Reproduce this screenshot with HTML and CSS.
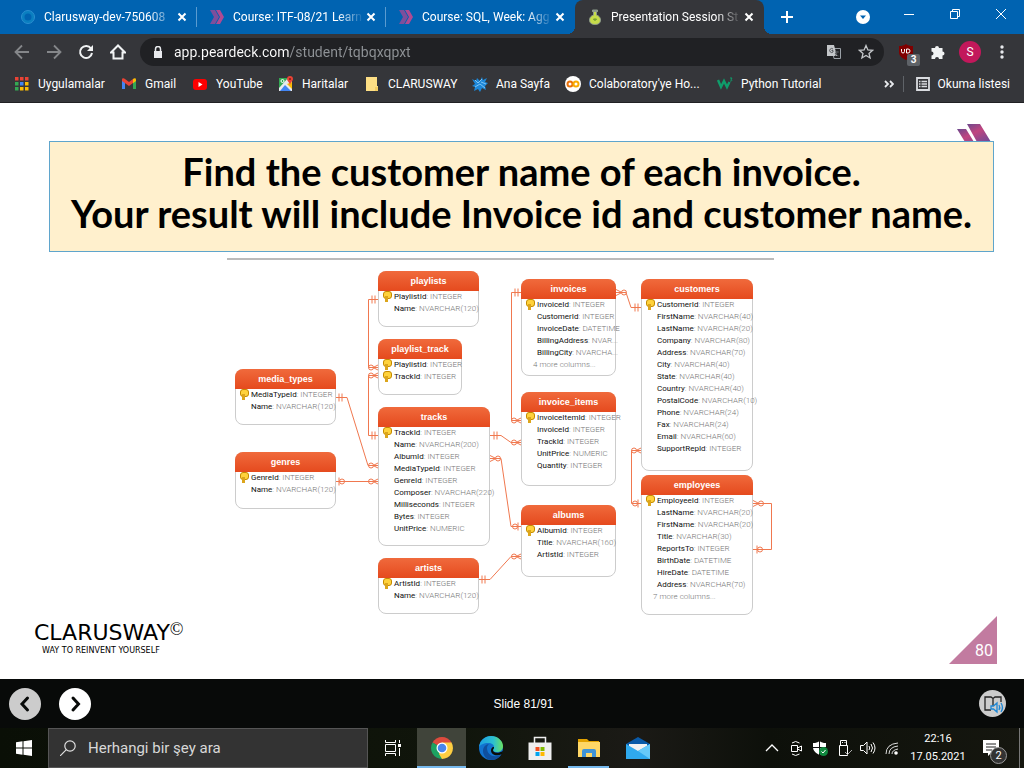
FILE: index.html
```html
<!DOCTYPE html>
<html lang="tr">
<head>
<meta charset="utf-8">
<title>Presentation Session Student</title>
<link rel="stylesheet" href="styles.css">
</head>
<body>
<header class="browser">
  <div class="tabstrip">
    <div class="tab">
      <svg class="icon" viewBox="0 0 16 16"><circle cx="8" cy="8" r="5" fill="none" stroke="#0a7fc0" stroke-width="3"/><circle cx="8" cy="8" r="6.500" fill="none" stroke="#2b8fd0" stroke-width="1"/></svg>
      <span class="tab-title">Clarusway-dev-750608</span>
      <button class="tab-close" aria-label="Kapat"><svg viewBox="0 0 10 10"><path d="M1.500 1.500l7 7m0-7l-7 7"/></svg></button>
    </div>
    <div class="tab">
      <svg class="icon" viewBox="0 0 16 16"><path d="M1 1h5l4 7-4 7H1l4-7z" fill="#7d4f9c"/><path d="M7 1h4l4 7-4 7H7l4-7z" fill="#b04a92"/></svg>
      <span class="tab-title">Course: ITF-08/21 Learn</span>
      <button class="tab-close" aria-label="Kapat"><svg viewBox="0 0 10 10"><path d="M1.500 1.500l7 7m0-7l-7 7"/></svg></button>
    </div>
    <div class="tab tab-last">
      <svg class="icon" viewBox="0 0 16 16"><path d="M1 1h5l4 7-4 7H1l4-7z" fill="#7d4f9c"/><path d="M7 1h4l4 7-4 7H7l4-7z" fill="#b04a92"/></svg>
      <span class="tab-title">Course: SQL, Week: Agg</span>
      <button class="tab-close" aria-label="Kapat"><svg viewBox="0 0 10 10"><path d="M1.500 1.500l7 7m0-7l-7 7"/></svg></button>
    </div>
    <div class="tab tab-active">
      <svg class="icon" viewBox="0 0 16 16"><path d="M5.500 1h5v1.500h-1V6c3 1 4 3 4 5 0 3-2 4.500-5.500 4.500S2.500 14 2.500 11c0-2 1-4 4-5V2.500h-1z" fill="#c6dc4a" stroke="#8d9a8a"/><path d="M5.500 1h5v2h-5z" fill="#8d9a8a"/><path d="M8 9v3m-2-2l2 1 2-1" stroke="#6f9a2e" fill="none"/></svg>
      <span class="tab-title">Presentation Session St</span>
      <button class="tab-close" aria-label="Kapat"><svg viewBox="0 0 10 10"><path d="M1.500 1.500l7 7m0-7l-7 7"/></svg></button>
    </div>
    <button class="new-tab" aria-label="Yeni sekme"><svg viewBox="0 0 12 12"><path d="M6 0v12M0 6h12"/></svg></button>
    <div class="window-buttons">
      <button aria-label="Sekme ara"><svg width="14" height="14" viewBox="0 0 14 14"><circle cx="7" cy="7" r="7" fill="#fff"/><path d="M4 5.500h6L7 9z" fill="#0063b1"/></svg></button>
      <button aria-label="Simge durumuna küçült"><svg width="10" height="14" viewBox="0 0 10 14"><path d="M0 6.500h10" stroke="#fff"/></svg></button>
      <button aria-label="Önceki boyut"><svg width="10" height="14" viewBox="0 0 10 14"><path d="M.5 3.500h7v7h-7zM2.500 3.500v-2h7v7h-2" fill="none" stroke="#fff"/></svg></button>
      <button aria-label="Pencereyi kapat"><svg width="10" height="14" viewBox="0 0 10 14"><path d="M0 1l10 10M10 1L0 11" stroke="#fff"/></svg></button>
    </div>
  </div>

  <div class="toolbar">
    <nav class="nav-buttons">
      <button class="dim" aria-label="Geri"><svg width="16" height="16" viewBox="0 0 16 16"><path d="M15 8H2m6-6.500L1.500 8 8 14.500"/></svg></button>
      <button class="dim" aria-label="İleri"><svg width="16" height="16" viewBox="0 0 16 16"><path d="M1 8h13M8 1.500L14.500 8 8 14.500"/></svg></button>
      <button aria-label="Yenile"><svg width="16" height="16" viewBox="0 0 16 16"><path d="M13 4.500A6 6 0 1 0 14 9" stroke-width="2"/><path d="M15 1v6H9z" fill="#f1f3f4" stroke="none"/></svg></button>
      <button aria-label="Ana sayfa"><svg width="16" height="16" viewBox="0 0 16 16"><path d="M1 8.500L8 1.500l7 7h-2.500v6h-9v-6z" stroke-width="2"/></svg></button>
    </nav>
    <div class="omnibox">
      <svg width="10" height="12" viewBox="0 0 10 12"><path d="M1 5h8v7H1z" fill="#e8eaed"/><path d="M2.500 5V3a2.500 2.500 0 0 1 5 0v2" fill="none" stroke="#e8eaed" stroke-width="1.500"/></svg>
      <input class="url" aria-label="Adres" value="app.peardeck.com/student/tqbqxqpxt">
      <button aria-label="Çevir"><svg width="16" height="16" viewBox="0 0 16 16"><path d="M6 4.500h8.500v10H8z" fill="none" stroke="#9aa0a6"/><path d="M1 1h7l3 11H1z" fill="#c4c7ca"/><path d="M7 5a2 2 0 1 0 0 3V6.500H5.500M9 8h4m-2-1v1c0 1.500-1 3-2 4m0-3c1 1.500 2 2.500 3.500 3" fill="none" stroke="#55585c"/></svg></button>
      <button aria-label="Yer işareti"><svg width="16" height="16" viewBox="0 0 16 16"><path d="M8 1.500l1.900 4.400 4.700.4-3.600 3.100 1.100 4.600L8 11.500 3.900 14 5 9.400 1.400 6.300l4.700-.4z" fill="none" stroke="#c4c7ca" stroke-width="1.300"/></svg></button>
    </div>
    <div class="extensions">
      <button class="ublock" aria-label="uBlock"><svg width="16" height="16" viewBox="0 0 16 16"><path d="M8 0c2 1.500 4 2 7 2v6c0 4-3 6-7 8-4-2-7-4-7-8V2c3 0 5-.5 7-2z" fill="#800000"/><path d="M3.500 5v2.500a1.500 1.500 0 0 0 3 0V5m2 4V5H10a2 2 0 0 1 0 4z" fill="none" stroke="#fff"/></svg><span class="badge">3</span></button>
      <button aria-label="Uzantılar"><svg width="16" height="16" viewBox="0 0 16 16"><path d="M1.500 4H5a2 2 0 1 1 4 0h3.500v3.500a2 2 0 1 1 0 4V15H9a2 2 0 1 0-4 0H1.500v-3.500a2 2 0 1 0 0-4z" fill="#f1f3f4"/></svg></button>
      <button class="avatar" aria-label="Profil">S</button>
      <button aria-label="Menü"><svg width="4" height="14" viewBox="0 0 4 14"><g fill="#e8eaed"><circle cx="2" cy="2" r="1.700"/><circle cx="2" cy="7" r="1.700"/><circle cx="2" cy="12" r="1.700"/></g></svg></button>
    </div>
  </div>

  <nav class="bookmarks">
    <div class="bookmark-list">
      <a href="#"><svg class="icon" viewBox="0 0 16 16"><path d="M1 1h3.500v3.500H1zm5 0h3.500v3.500H6zm5 0h3.500v3.500H11z" fill="#ea4335"/><path d="M1 6h3.500v3.500H1z" fill="#34a853"/><path d="M6 6h3.500v3.500H6z" fill="#4285f4"/><path d="M11 6h3.500v3.500H11z" fill="#fbbc04"/><path d="M1 11h3.500v3.500H1z" fill="#34a853"/><path d="M6 11h3.500v3.500H6zm5 0h3.500v3.500H11z" fill="#fbbc04"/></svg>Uygulamalar</a>
      <a href="#"><svg class="icon" viewBox="0 0 16 16"><path d="M1 4v9h3V6z" fill="#4285f4"/><path d="M12 6v7h3V4z" fill="#34a853"/><path d="M1 3.500C1 2 3 2 4 3l4 3 4-3v4L8 10 1 5z" fill="#ea4335"/><path d="M12 3c1-1 3-1 3 .5V5l-3 2.200z" fill="#fbbc04"/></svg>Gmail</a>
      <a href="#"><svg class="icon" viewBox="0 0 16 16"><rect x="1" y="3" width="14" height="11" rx="3" fill="#f00"/><path d="M6.500 6v5l4-2.500z" fill="#fff"/></svg>YouTube</a>
      <a href="#"><svg class="icon" viewBox="0 0 16 16"><path d="M1 2h13v13H1z" fill="#e8eaed"/><path d="M1 2h9L1 12z" fill="#34a853"/><path d="M2 15l5-6 6 6z" fill="#4285f4"/><path d="M9 8l5 5V6z" fill="#fbbc04"/><circle cx="4.500" cy="5" r="1.500" fill="none" stroke="#fff"/><path d="M12 0a3 3 0 0 0-3 3c0 2.500 3 3 3 7 0-4 3-4.500 3-7a3 3 0 0 0-3-3z" fill="#ea4335"/><circle cx="12" cy="3" r="1" fill="#7b1c14"/></svg>Haritalar</a>
      <a href="#"><svg class="icon" viewBox="0 0 16 16"><path d="M2 1h11v9h1v5H2z" fill="#fddf85"/><path d="M11 15v-4h3v4z" fill="#f4ce62"/></svg>CLARUSWAY</a>
      <a href="#"><svg class="icon" viewBox="0 0 16 16"><path d="M8 5l2-4 1 3 4-2-2 4 3 1-3 3 1 4-4-2-2 4-2-3-4 2 1-4-3-1 3-2-3-5 4 2 1-3z" fill="#1d87d8"/><path d="M3 4l3 3 4-4m-7 8l5-3 5 4M9 6l5 2" stroke="#7cc4f4" fill="none"/></svg>Ana Sayfa</a>
      <a href="#"><svg class="icon" viewBox="0 0 16 16"><circle cx="8" cy="8" r="8" fill="#fff"/><circle cx="5" cy="8" r="2.500" fill="none" stroke="#e8710a" stroke-width="2"/><circle cx="11" cy="8" r="2.500" fill="none" stroke="#f9ab00" stroke-width="2"/></svg>Colaboratory'ye Ho...</a>
      <a href="#"><svg class="icon" viewBox="0 0 16 16"><path d="M1 4l3 7 3-6 3 6 2.500-5" fill="none" stroke="#0f9d6b" stroke-width="2.400"/><path d="M13 2h2l-1 1.500c1.500 0 1 2-1 1.500" fill="none" stroke="#0f9d6b"/></svg>Python Tutorial</a>
    </div>
    <button class="more" aria-label="Diğer"><svg width="10" height="8" viewBox="0 0 10 8"><path d="M1 1l3 3-3 3M6 1l3 3-3 3" fill="none" stroke="#e8eaed" stroke-width="1.800"/></svg></button>
    <a class="reading" href="#"><svg width="14" height="14" viewBox="0 0 14 14"><path d="M1 1h12v12H1z" fill="none" stroke="#dadce0" stroke-width="1.800"/><path d="M3 4.500h1.500m1 0H11M3 7h1.500m1 0H11M3 9.500h1.500m1 0H11" stroke="#dadce0" stroke-width="1.400"/></svg>Okuma listesi</a>
  </nav>
</header>

<main class="slide">
  <svg class="mark" viewBox="0 0 34 18" width="34" height="18"><defs><linearGradient id="mg" x2="1" y2="1"><stop offset="0" stop-color="#4b4a94"/><stop offset=".5" stop-color="#c0457f"/><stop offset="1" stop-color="#6a4a98"/></linearGradient></defs><path d="M0 5h9l8 13H8zM10 0h13l11 18H20z" fill="url(#mg)"/></svg>
  <h1 class="question">Find the customer name of each invoice.<br>Your result will include Invoice id and customer name.</h1>
  <div class="diagram-area">
    <div class="diagram">
      <svg class="links" viewBox="227 258 547 358" width="547" height="358">
        <defs>
          <g id="one"><path d="M4-4v8M7-4v8"/></g>
          <g id="many"><path d="M0-3l6 3-6 3"/><circle cx="8" cy="0" r="2.500"/></g>
          <g id="opt"><path d="M4-4v8"/><circle cx="7" cy="0" r="2.500"/></g>
        </defs>
        <path d="M379 299.500H368.500V367.500H379M379 375.500H368.500V435.500H379M335 397.500H347L368 465.500H379M335 481.500H379M490 435.500H501L511 442.500H522M522 292.500H511.500V420.500H522M616 292.500H626L631 307.500H642M490 458.500H501L511 526.500H522M478 579.500H490L511 556.500H522M642 450.500H631.500V503.500H642M753 503.500H771.500V549.500H753"/>
        <use href="#one" transform="translate(379 299.500) scale(-1 1)"/>
        <use href="#many" transform="translate(379 367.500) scale(-1 1)"/>
        <use href="#many" transform="translate(379 375.500) scale(-1 1)"/>
        <use href="#one" transform="translate(379 435.500) scale(-1 1)"/>
        <use href="#one" transform="translate(335 397.500)"/>
        <use href="#many" transform="translate(379 465.500) scale(-1 1)"/>
        <use href="#opt" transform="translate(335 481.500)"/>
        <use href="#many" transform="translate(379 481.500) scale(-1 1)"/>
        <use href="#one" transform="translate(490 435.500)"/>
        <use href="#many" transform="translate(522 442.500) scale(-1 1)"/>
        <use href="#one" transform="translate(522 292.500) scale(-1 1)"/>
        <use href="#many" transform="translate(522 420.500) scale(-1 1)"/>
        <use href="#many" transform="translate(616 292.500)"/>
        <use href="#one" transform="translate(642 307.500) scale(-1 1)"/>
        <use href="#many" transform="translate(490 458.500)"/>
        <use href="#opt" transform="translate(522 526.500) scale(-1 1)"/>
        <use href="#one" transform="translate(478 579.500)"/>
        <use href="#many" transform="translate(522 556.500) scale(-1 1)"/>
        <use href="#many" transform="translate(642 450.500) scale(-1 1)"/>
        <use href="#opt" transform="translate(642 503.500) scale(-1 1)"/>
        <use href="#many" transform="translate(753 503.500)"/>
        <use href="#opt" transform="translate(753 549.500)"/>
      </svg>

      <section class="entity playlists"><h2>playlists</h2><ul><li class="key"><b>PlaylistId</b>: INTEGER</li><li><b>Name</b>: NVARCHAR(120)</li></ul></section>
      <section class="entity playlist-track"><h2>playlist_track</h2><ul><li class="key"><b>PlaylistId</b>: INTEGER</li><li class="key"><b>TrackId</b>: INTEGER</li></ul></section>
      <section class="entity tracks"><h2>tracks</h2><ul><li class="key"><b>TrackId</b>: INTEGER</li><li><b>Name</b>: NVARCHAR(200)</li><li><b>AlbumId</b>: INTEGER</li><li><b>MediaTypeId</b>: INTEGER</li><li><b>GenreId</b>: INTEGER</li><li><b>Composer</b>: NVARCHAR(220)</li><li><b>Milliseconds</b>: INTEGER</li><li><b>Bytes</b>: INTEGER</li><li><b>UnitPrice</b>: NUMERIC</li></ul></section>
      <section class="entity artists"><h2>artists</h2><ul><li class="key"><b>ArtistId</b>: INTEGER</li><li><b>Name</b>: NVARCHAR(120)</li></ul></section>
      <section class="entity media-types"><h2>media_types</h2><ul><li class="key"><b>MediaTypeId</b>: INTEGER</li><li><b>Name</b>: NVARCHAR(120)</li></ul></section>
      <section class="entity genres"><h2>genres</h2><ul><li class="key"><b>GenreId</b>: INTEGER</li><li><b>Name</b>: NVARCHAR(120)</li></ul></section>
      <section class="entity invoices"><h2>invoices</h2><ul><li class="key"><b>InvoiceId</b>: INTEGER</li><li><b>CustomerId</b>: INTEGER</li><li><b>InvoiceDate</b>: DATETIME</li><li><b>BillingAddress</b>: NVAR...</li><li><b>BillingCity</b>: NVARCHA...</li><li class="rest">4 more columns...</li></ul></section>
      <section class="entity invoice-items"><h2>invoice_items</h2><ul><li class="key"><b>InvoiceItemId</b>: INTEGER</li><li><b>InvoiceId</b>: INTEGER</li><li><b>TrackId</b>: INTEGER</li><li><b>UnitPrice</b>: NUMERIC</li><li><b>Quantity</b>: INTEGER</li></ul></section>
      <section class="entity albums"><h2>albums</h2><ul><li class="key"><b>AlbumId</b>: INTEGER</li><li><b>Title</b>: NVARCHAR(160)</li><li><b>ArtistId</b>: INTEGER</li></ul></section>
      <section class="entity customers"><h2>customers</h2><ul><li class="key"><b>CustomerId</b>: INTEGER</li><li><b>FirstName</b>: NVARCHAR(40)</li><li><b>LastName</b>: NVARCHAR(20)</li><li><b>Company</b>: NVARCHAR(80)</li><li><b>Address</b>: NVARCHAR(70)</li><li><b>City</b>: NVARCHAR(40)</li><li><b>State</b>: NVARCHAR(40)</li><li><b>Country</b>: NVARCHAR(40)</li><li><b>PostalCode</b>: NVARCHAR(10)</li><li><b>Phone</b>: NVARCHAR(24)</li><li><b>Fax</b>: NVARCHAR(24)</li><li><b>Email</b>: NVARCHAR(60)</li><li><b>SupportRepId</b>: INTEGER</li></ul></section>
      <section class="entity employees"><h2>employees</h2><ul><li class="key"><b>EmployeeId</b>: INTEGER</li><li><b>LastName</b>: NVARCHAR(20)</li><li><b>FirstName</b>: NVARCHAR(20)</li><li><b>Title</b>: NVARCHAR(30)</li><li><b>ReportsTo</b>: INTEGER</li><li><b>BirthDate</b>: DATETIME</li><li><b>HireDate</b>: DATETIME</li><li><b>Address</b>: NVARCHAR(70)</li><li class="rest">7 more columns...</li></ul></section>
    </div>
  </div>
  <footer class="slide-foot">
    <div class="brand"><div class="brand-name">CLARUSWAY<span class="copy">©</span></div><div class="brand-line">WAY TO REINVENT YOURSELF</div></div>
    <div class="page-no">80</div>
  </footer>
</main>

<div class="player">
  <div class="player-nav">
    <button class="round prev" aria-label="Önceki"><svg width="32" height="32" viewBox="0 0 32 32"><path d="M18.500 10L13 16l5.500 6"/></svg></button>
    <button class="round" aria-label="Sonraki"><svg width="32" height="32" viewBox="0 0 32 32"><path d="M14 10l5.500 6-5.500 6"/></svg></button>
  </div>
  <span class="counter">Slide 81/91</span>
  <button class="reader" aria-label="Sesli okuma"><svg width="28" height="28" viewBox="0 0 28 28"><path d="M12 20H6V7h6l2 1.500L16 7h6v5M14 8.500V16" fill="none" stroke="#222" stroke-width="1.300"/><path d="M12 16h2.500l3.500-3v9l-3.500-3H12zM20 15q1.500 2.500 0 5M22 13q3 4.500 0 9" fill="none" stroke="#1c87d6" stroke-width="1.300"/></svg></button>
</div>

<footer class="taskbar">
  <button class="task" aria-label="Başlat"><svg width="16" height="16" viewBox="0 0 16 16"><path d="M0 2.200l6.500-.9v6.200H0zM7.500 1.200L16 0v7.500H7.500zM0 8.500h6.500v6.200L0 13.800zM7.500 8.500H16V16l-8.500-1.200z" fill="#fff"/></svg></button>
  <label class="search"><svg width="16" height="16" viewBox="0 0 16 16"><circle cx="10" cy="6" r="5.200" fill="none" stroke="#e0e0e0" stroke-width="1.200"/><path d="M6.300 9.700L0 16" stroke="#e0e0e0" stroke-width="1.200"/></svg><input type="text" placeholder="Herhangi bir şey ara" aria-label="Ara"></label>
  <button class="task" aria-label="Görev görünümü"><svg width="16" height="16" viewBox="0 0 16 16"><path d="M.5 0v2.500h10V0M.5 16v-2.500h10V16M.5 4.500h10v7H.5zM14.500 0v3M14.500 8v8" fill="none" stroke="#fff"/><path d="M13 4h3v3h-3z" fill="#fff"/></svg></button>
  <button class="task current" aria-label="Chrome"><svg width="24" height="24" viewBox="0 0 24 24"><path d="M12 12L2.500 6.500A11 11 0 0 1 21.500 6.500z" fill="#dd4b3e"/><path d="M12 12l9.500-5.500A11 11 0 0 1 12 23z" fill="#fdce42"/><path d="M12 12v11A11 11 0 0 1 2.500 6.500z" fill="#1da261"/><path d="M12 6.500h9.500l-5 8L12 23 9 18z" fill="#fdce42"/><circle cx="12" cy="12" r="5.500" fill="#fff"/><circle cx="12" cy="12" r="4.300" fill="#4a86ed"/></svg></button>
  <button class="task" aria-label="Edge"><svg width="24" height="24" viewBox="0 0 24 24"><defs><linearGradient id="eg"><stop offset="0" stop-color="#1c9fe2"/><stop offset=".6" stop-color="#2cc0d0"/><stop offset="1" stop-color="#6ae25f"/></linearGradient></defs><circle cx="12" cy="12" r="12" fill="#1273cf"/><path d="M0 11C1 4 6 0 12 0c7 0 12 5 12 10 0 4-3 6-6 6-2 0-4-.5-4-2 0-1 1-1 1-3 0-2-2-4-6-4-4 0-8 2-9 4z" fill="url(#eg)"/><path d="M8 12c0 6 5 9 10 8 2 0 3-1 4.500-2-2 4-6 6-10 6C7 24 4 19 4 15c0-4 3-7 6-7-1 1-2 2-2 4z" fill="#0f4f9e"/><path d="M14 14c0 3 5 4 10 1l-1 3c-5 2.500-11 1-11-3.500 0-2 1-3 2-3.500h1c0 2-1 2-1 3z" fill="#0b0d08"/></svg></button>
  <button class="task" aria-label="Store"><svg width="24" height="24" viewBox="0 0 24 24"><path d="M6.500 7V1.500h11V7" fill="none" stroke="#eee" stroke-width="1.500"/><path d="M.5 6.500h23V24H.5z" fill="#efefef"/><path d="M7.500 11h4v4h-4z" fill="#f25022"/><path d="M12.500 11h4v4h-4z" fill="#7fba00"/><path d="M7.500 16h4v4h-4z" fill="#00a4ef"/><path d="M12.500 16h4v4h-4z" fill="#ffb900"/></svg></button>
  <button class="task open" aria-label="Dosya Gezgini"><svg width="24" height="24" viewBox="0 0 24 24"><path d="M1 3h9l2 2h10v3H1z" fill="#e3a200"/><path d="M1 6h22v15H1z" fill="#ffd766"/><path d="M5 21v-6q0-2 2-2h10q2 0 2 2v6h-4v-4H9v4z" fill="#3f93d6"/></svg></button>
  <button class="task" aria-label="Posta"><svg width="24" height="24" viewBox="0 0 24 24"><path d="M0 8l12-7 12 7v8H0z" fill="#0a5aa8"/><path d="M3 8h18v8H3z" fill="#f2f2f2"/><path d="M0 8l12 7 12-7v15H0z" fill="#2fa9ee"/><path d="M24 8v15L12 15z" fill="#66c9f8"/></svg></button>
  <div class="tray">
    <svg viewBox="0 0 16 16"><path d="M2 11l6-6 6 6" fill="none" stroke="#fff" stroke-width="1.300"/></svg>
    <svg viewBox="0 0 16 16"><path d="M3.500 5.500h6v6h-6zM9.500 8l4-2v5l-4-2M4 3q3.500-3 7.500 0M4 14q3.500 3 7.500 0" fill="none" stroke="#fff"/></svg>
    <svg viewBox="0 0 16 16"><path d="M7.500 1C5.500 2.500 4 3 1 3v4c0 4 3 6 6.500 8C11 13 14 11 14 7V3c-3 0-4.500-.5-6.500-2z" fill="#fff"/><path d="M7.500 1v14M1 7.500h13" stroke="#111"/><circle cx="11.500" cy="11.500" r="4.500" fill="#10893e"/><path d="M9.500 11.500l1.500 1.500 2.500-3" fill="none" stroke="#fff"/></svg>
    <svg viewBox="0 0 16 16"><path d="M4.500 5V.5h6V5M3.500 5.500h8v10h-8zM6 2.500h1m1.500 0h1" fill="none" stroke="#fff"/><path d="M9 12l2.500 2.500L16 10" fill="none" stroke="#aaa"/></svg>
    <svg viewBox="0 0 16 16"><path d="M.5 5.500h3L7 2v12l-3.500-3.500h-3zM9 6q1.500 2 0 4M11 4q3 4 0 8M13 2.500q4 5.500 0 11" fill="none" stroke="#fff"/></svg>
    <svg viewBox="0 0 16 16"><g fill="none" stroke="#ddd"><path d="M2 14Q2 4 14 3M5 14Q5 7 14 6M8 14Q8 10 14 9"/></g><circle cx="12" cy="13" r="1.800" fill="#fff"/></svg>
    <div class="clock"><span>22:16</span><span>17.05.2021</span></div>
    <div class="notice"><svg viewBox="0 0 18 16" width="18" height="16"><path d="M1 0h16v13H9l-3 3v-3H1z" fill="#fff"/><path d="M4 4h10M4 7h10M4 10h6" stroke="#222"/></svg><span class="notice-count">2</span></div>
  </div>
</footer>
</body>
</html>
```
FILE: styles.css
```css
* { box-sizing: border-box; }
body {
  margin: 0;
  min-height: 100vh;
  display: flex;
  flex-direction: column;
  background: #fff;
  font-family: Roboto, "Open Sans", sans-serif;
  font-size: 12px;
  color: #fff;
}
button { margin: 0; padding: 0; border: 0; background: none; color: inherit; font: inherit; display: flex; align-items: center; justify-content: center; }
input { border: 0; padding: 0; background: none; font: inherit; outline: 0; min-width: 0; }
a { color: inherit; text-decoration: none; }
svg { display: block; flex: none; }
.icon { width: 16px; height: 16px; }

/* Tabs */
.browser { background: #35363a; border-bottom: 1px solid #202124; }
.tabstrip { display: flex; height: 34px; background: #0063b1; padding-left: 8px; }
.tab { position: relative; flex: 0 1 189px; min-width: 0; display: flex; align-items: center; gap: 8px; padding: 0 10px 0 12px; }
.tab:not(.tab-active):not(.tab-last)::after { content: ""; position: absolute; right: 0; top: 7px; height: 20px; width: 1px; background: #5a9bd0; }
.tab-title { flex: 1; margin-right: -6px; overflow: hidden; white-space: nowrap; mask-image: linear-gradient(90deg, #000 80%, transparent); }
.tab-close svg { width: 10px; height: 10px; stroke: #fff; stroke-width: 2; }
.tab-active { background: #35363a; border-radius: 8px 8px 0 0; }
.tab-active::before, .tab-active::after { content: ""; position: absolute; bottom: 0; width: 8px; height: 8px; }
.tab-active::before { left: -8px; background: radial-gradient(circle at 0 0, transparent 8px, #35363a 8px); }
.tab-active::after { right: -8px; background: radial-gradient(circle at 100% 0, transparent 8px, #35363a 8px); }
.new-tab { width: 46px; }
.new-tab svg { width: 12px; height: 12px; stroke: #fff; stroke-width: 2; }
.window-buttons { flex: 1; display: flex; justify-content: flex-end; }
.window-buttons button { width: 46px; height: 30px; }
.window-buttons button:first-child { height: 34px; }

/* Toolbar */
.toolbar { display: flex; align-items: center; height: 36px; padding: 0 20px 0 14px; }
.nav-buttons { display: flex; gap: 16px; }
.nav-buttons svg { fill: none; stroke: #f1f3f4; stroke-width: 1.8; }
.nav-buttons .dim svg { stroke: #85878a; }
.omnibox { flex: 1; min-width: 0; height: 28px; margin: 0 14px 0 14px; padding: 0 10px 0 13px; border-radius: 14px; background: #202124; display: flex; align-items: center; gap: 16px; }
.url { flex: 1; margin-left: -5px; font-size: 14px; color: transparent; background: linear-gradient(90deg, #fff 115px, #8f9397 115px); background-clip: text; -webkit-background-clip: text; }
.extensions { display: flex; align-items: center; gap: 16px; }
.ublock { position: relative; }
.badge { position: absolute; left: 9px; top: 10px; width: 13px; height: 12px; border-radius: 2px; background: #5f6368; font: bold 10px/12px Roboto, sans-serif; }
.avatar { width: 22px; height: 22px; border-radius: 50%; background: #c2185b; margin-left: -3px; }
.extensions button:last-child { margin-left: 3px; }

/* Bookmarks */
.bookmarks { display: flex; align-items: center; height: 32px; padding: 0 14px 4px; }
.bookmark-list { flex: 1; min-width: 0; display: grid; grid-template-columns: 107px 71px 86px 86px 108px 93px 152px 1fr; }
.bookmarks a { display: flex; align-items: center; gap: 8px; white-space: nowrap; }
.more { margin-right: 9px; }
.bookmarks .reading { border-left: 1px solid #5f6368; height: 16px; padding-left: 12px; }

/* Slide */
.slide { position: relative; flex: 1; display: flex; flex-direction: column; background: #fff; color: #000; padding-top: 38px; }
.mark { position: absolute; right: 33px; top: 21px; }
.question { position: relative; margin: 0 30px 0 49px; min-height: 111px; padding-top: 8px; border: 1px solid #5fa5cc; background: #fff0cd; font: bold 38px/42px Lato, sans-serif; text-align: center; }
.diagram-area { display: flex; justify-content: center; padding: 6px 23px 0 0; }
.diagram { position: relative; width: 547px; height: 358px; border-top: 2px solid #bbb; }
.links { position: absolute; left: 0; top: -2px; fill: none; stroke: #f0784f; stroke-width: 1; }
.entity { position: absolute; border: 1px solid #ccc; border-radius: 8px; background: #fff; }
.entity h2 { margin: -1px -1px 0; height: 20px; border-radius: 8px 8px 0 0; background: linear-gradient(#f06a3c, #e54a1e); color: #fff; font: bold 9px/20px "Liberation Sans", sans-serif; text-align: center; }
.entity ul { margin: 0; padding: 0; list-style: none; font: 300 8px/12px Roboto, sans-serif; color: #777; }
.entity li { position: relative; padding-left: 15px; white-space: nowrap; }
.entity b { color: #111; font-weight: 400; }
.entity .rest { padding-left: 11px; }
.key::before { content: ""; position: absolute; left: 4px; top: 0; width: 7px; height: 6px; border: 1px solid #c48a00; border-radius: 3px; background: #ffd23c; }
.key::after { content: ""; position: absolute; left: 6px; top: 5px; width: 3px; height: 6px; background: #dca51c; }
.playlists { left: 151px; top: 11px; width: 101px; height: 56px; }
.playlist-track { left: 151px; top: 79px; width: 84px; height: 56px; }
.tracks { left: 151px; top: 147px; width: 112px; height: 139px; }
.artists { left: 151px; top: 298px; width: 101px; height: 56px; }
.media-types { left: 8px; top: 109px; width: 101px; height: 56px; }
.genres { left: 8px; top: 192px; width: 101px; height: 57px; }
.invoices { left: 294px; top: 19px; width: 95px; height: 97px; }
.invoice-items { left: 294px; top: 132px; width: 95px; height: 94px; }
.albums { left: 294px; top: 245px; width: 95px; height: 72px; }
.customers { left: 414px; top: 19px; width: 112px; height: 192px; }
.employees { left: 414px; top: 215px; width: 112px; height: 140px; }
.slide-foot { display: flex; justify-content: space-between; align-items: flex-start; padding: 0 27px 15px 34px; }
.brand { padding-top: 4px; }
.brand-name { font: 22px/26px "DejaVu Sans", sans-serif; display: flex; }
.copy { font: 18px/18px "Liberation Serif", serif; }
.brand-line { padding-left: 8px; font: 8px/10px "DejaVu Sans", sans-serif; }
.page-no { width: 48px; height: 48px; padding: 24px 4px 0 0; background: #c27ba0; clip-path: polygon(100% 0, 100% 100%, 0 100%); color: #fff; font: 16px/22px Roboto, sans-serif; text-align: right; }

/* Player */
.player { display: grid; grid-template-columns: 1fr auto 1fr; align-items: center; height: 49px; padding: 0 18px 0 9px; background: #080a09; }
.player-nav { display: flex; gap: 18px; }
.round { width: 32px; height: 32px; border-radius: 50%; background: #fff; }
.round svg { fill: none; stroke: #080a09; stroke-width: 3; stroke-linecap: round; }
.prev { background: #ccc; }
.counter { padding-left: 32px; font: 12px/16px "Liberation Sans", sans-serif; }
.reader { justify-self: end; width: 27px; height: 27px; border-radius: 50%; background: #ccc; }

/* Taskbar */
.taskbar { display: flex; height: 40px; background: linear-gradient(90deg, #0a0f06, #10150b 45%, #1b1a16 62%, #0d100a 75%, #15160f); }
.task { width: 49px; height: 40px; }
.task:first-child { width: 48px; }
.search { flex: 0 1 320px; display: flex; align-items: center; gap: 12px; padding: 0 11px; border: 1px solid #555; background: #333; }
.search input { flex: 1; font-size: 15px; color: #ddd; }
.search input::placeholder { color: #d8d8d8; opacity: 1; }
.current { background: #40443a; box-shadow: inset 0 -2px #76b9ed; }
.open { position: relative; }
.open::after { content: ""; position: absolute; left: 4px; right: 4px; bottom: 0; height: 2px; background: #76b9ed; }
.tray { margin-left: auto; display: flex; align-items: center; gap: 8px; padding-right: 4px; }
.tray > svg { width: 16px; height: 16px; }
.clock { width: 60px; display: flex; flex-direction: column; align-items: center; font-size: 11px; line-height: 18px; }
.notice { position: relative; width: 44px; height: 40px; padding: 12px 0 0 6px; border-right: 1px solid #777; }
.notice-count { position: absolute; left: 14px; top: 19px; width: 17px; height: 17px; border: 1px solid #999; border-radius: 50%; background: #333; font-size: 11px; line-height: 15px; text-align: center; }
```
